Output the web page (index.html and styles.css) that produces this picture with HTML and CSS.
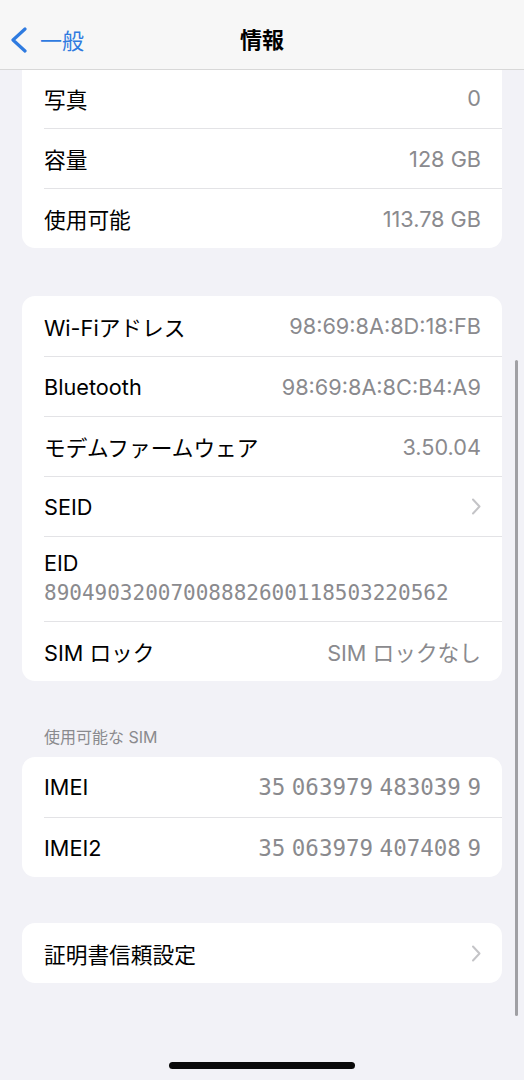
FILE: index.html
```html
<!DOCTYPE html>
<html lang="ja">
<head>
  <meta charset="UTF-8">
  <title>情報</title>
  <meta name="viewport" content="width=device-width, initial-scale=1.0">
  <link rel="stylesheet" href="styles.css">
</head>
<body>
  <div class="pantalla">
    <header class="cabecera">
      <a class="volver" href="#">
        <svg width="20" height="28" viewBox="0 0 20 28"><polyline points="15,2 3,13 15,24" fill="none" stroke="#2f7be0" stroke-width="3.2" stroke-linecap="round" stroke-linejoin="round"/></svg>
        <span>一般</span>
      </a>
      <h1>情報</h1>
    </header>

    <div class="contenido">
      <div class="grupo grupo-primero">
        <div class="fila"><span>写真</span><span class="valor">0</span></div>
        <div class="fila"><span>容量</span><span class="valor">128 GB</span></div>
        <div class="fila"><span>使用可能</span><span class="valor">113.78 GB</span></div>
      </div>

      <div class="grupo">
        <div class="fila"><span>Wi-Fiアドレス</span><span class="valor">98:69:8A:8D:18:FB</span></div>
        <div class="fila"><span>Bluetooth</span><span class="valor">98:69:8A:8C:B4:A9</span></div>
        <div class="fila"><span>モデムファームウェア</span><span class="valor">3.50.04</span></div>
        <div class="fila"><span>SEID</span><span class="flecha"><svg width="10" height="17" viewBox="0 0 10 17"><polyline points="2,1.5 8.5,8.5 2,15.5" fill="none" stroke="#c4c4c7" stroke-width="2" stroke-linecap="round" stroke-linejoin="round"/></svg></span></div>
        <div class="fila fila-doble">
          <span class="etiqueta">EID</span>
          <span class="numero">89049032007008882600118503220562</span>
        </div>
        <div class="fila"><span>SIM ロック</span><span class="valor">SIM ロックなし</span></div>
      </div>

      <div class="titulo-grupo">使用可能な SIM</div>
      <div class="grupo grupo-sim">
        <div class="fila"><span>IMEI</span><span class="valor numero">35 063979 483039 9</span></div>
        <div class="fila"><span>IMEI2</span><span class="valor numero">35 063979 407408 9</span></div>
      </div>

      <div class="grupo">
        <div class="fila"><span>証明書信頼設定</span><span class="flecha"><svg width="10" height="17" viewBox="0 0 10 17"><polyline points="2,1.5 8.5,8.5 2,15.5" fill="none" stroke="#c4c4c7" stroke-width="2" stroke-linecap="round" stroke-linejoin="round"/></svg></span></div>
      </div>
    </div>

    <div class="barra-scroll"></div>
    <div class="indicador-inicio"></div>
  </div>
</body>
</html>
```

FILE: styles.css
```css
body {
  margin: 0;
  background: #f2f2f7;
  font-family: Inter, "Noto Sans CJK JP", sans-serif;
  color: #000;
}

.pantalla {
  position: relative;
  width: 524px;
  height: 1080px;
  overflow: hidden;
  background: #f2f2f7;
}

.cabecera {
  height: 69px;
  background: #f7f7f7;
  border-bottom: 1px solid #d8d8d8;
  display: flex;
  align-items: center;
  justify-content: center;
  position: relative;
}

.cabecera h1 {
  margin: 0;
  font-size: 22px;
  font-weight: 700;
  margin-top: 6px;
}

.volver {
  position: absolute;
  left: 10px;
  top: 27px;
  display: flex;
  align-items: center;
  gap: 10px;
  color: #2f7be0;
  text-decoration: none;
  font-size: 22px;
}

.volver span {
  margin-top: -4px;
}

.contenido {
  padding: 0 22px;
}

.grupo {
  background: #fff;
  border-radius: 13px;
  margin-top: 48px;
  overflow: hidden;
}

.grupo-primero {
  margin-top: -2px;
  border-radius: 0 0 13px 13px;
}

.grupo-sim {
  margin-top: 10px;
}

.grupo:last-child {
  margin-top: 46px;
}

.fila {
  height: 60px;
  margin-left: 22px;
  padding-right: 21px;
  display: flex;
  align-items: center;
  justify-content: space-between;
  font-size: 21.7px;
  border-top: 1px solid #e3e3e6;
  box-sizing: border-box;
}

.grupo .fila:first-child {
  border-top: none;
}

.valor {
  color: #8a8a8e;
}

.flecha {
  display: flex;
}

.fila-doble {
  height: 85px;
  flex-direction: column;
  align-items: flex-start;
  justify-content: flex-start;
  gap: 5px;
  padding-top: 13px;
}

.fila-doble .etiqueta {
  line-height: 26px;
}

.fila-doble .numero {
  line-height: 24px;
}

.numero {
  font-family: "DejaVu Sans Mono", monospace;
  color: #8a8a8e;
  font-size: 21px;
}

.valor.numero {
  font-size: 22.5px;
  word-spacing: -7px;
}

.titulo-grupo {
  margin: 46px 0 0 22px;
  font-size: 16px;
  color: #8a8a8e;
  line-height: 20px;
}

.barra-scroll {
  position: absolute;
  right: 6px;
  top: 360px;
  width: 3px;
  height: 656px;
  border-radius: 2px;
  background: #a0a0a4;
}

.indicador-inicio {
  position: absolute;
  left: 169px;
  bottom: 11px;
  width: 186px;
  height: 7px;
  border-radius: 4px;
  background: #0a0a0a;
}
```
